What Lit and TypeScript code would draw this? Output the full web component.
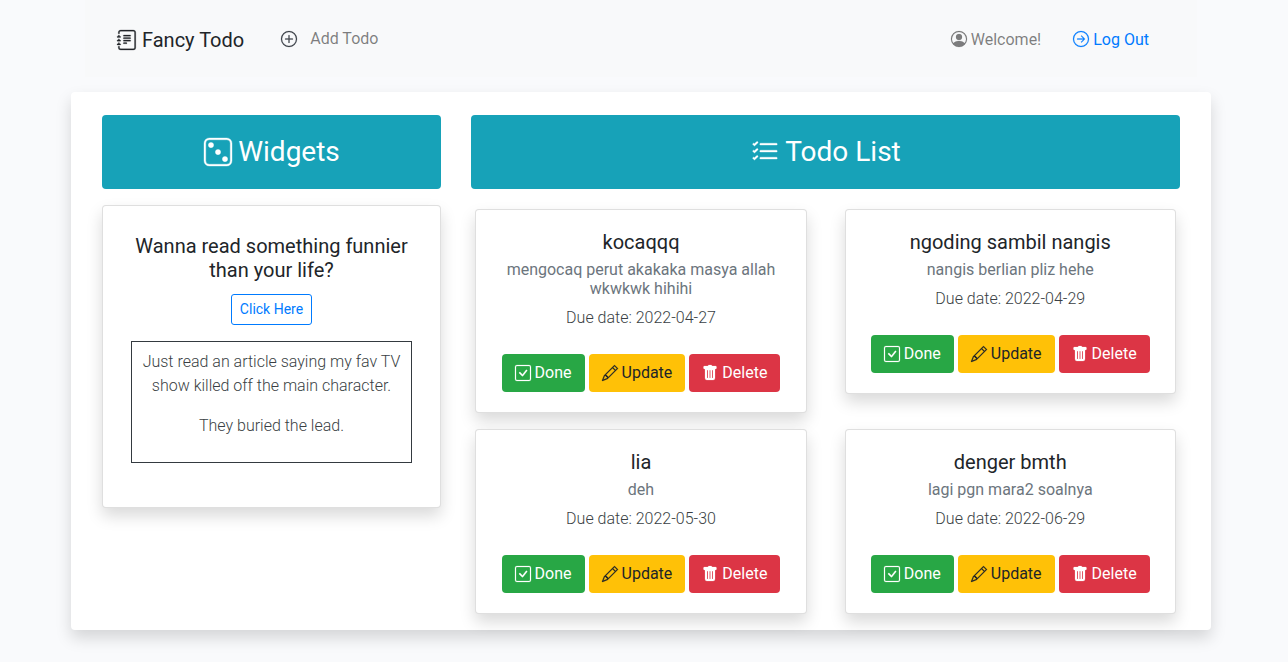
import { LitElement, html, css, svg } from "lit";
import { customElement } from "lit/decorators.js";

const icons: Record<string, any> = {
  journal: svg`<path d="M5 10.5a.5.5 0 0 1 .5-.5h2a.5.5 0 0 1 0 1h-2a.5.5 0 0 1-.5-.5zm0-2a.5.5 0 0 1 .5-.5h5a.5.5 0 0 1 0 1h-5a.5.5 0 0 1-.5-.5zm0-2a.5.5 0 0 1 .5-.5h5a.5.5 0 0 1 0 1h-5a.5.5 0 0 1-.5-.5zm0-2a.5.5 0 0 1 .5-.5h5a.5.5 0 0 1 0 1h-5a.5.5 0 0 1-.5-.5z"/><path d="M3 0h10a2 2 0 0 1 2 2v12a2 2 0 0 1-2 2H3a2 2 0 0 1-2-2v-1h1v1a1 1 0 0 0 1 1h10a1 1 0 0 0 1-1V2a1 1 0 0 0-1-1H3a1 1 0 0 0-1 1v1H1V2a2 2 0 0 1 2-2z"/><path d="M1 5v-.5a.5.5 0 0 1 1 0V5h.5a.5.5 0 0 1 0 1h-2a.5.5 0 0 1 0-1H1zm0 3v-.5a.5.5 0 0 1 1 0V8h.5a.5.5 0 0 1 0 1h-2a.5.5 0 0 1 0-1H1zm0 3v-.5a.5.5 0 0 1 1 0v.5h.5a.5.5 0 0 1 0 1h-2a.5.5 0 0 1 0-1H1z"/>`,
  plus: svg`<path d="M8 15A7 7 0 1 1 8 1a7 7 0 0 1 0 14zm0 1A8 8 0 1 0 8 0a8 8 0 0 0 0 16z"/><path d="M8 4a.5.5 0 0 1 .5.5v3h3a.5.5 0 0 1 0 1h-3v3a.5.5 0 0 1-1 0v-3h-3a.5.5 0 0 1 0-1h3v-3A.5.5 0 0 1 8 4z"/>`,
  person: svg`<path d="M11 6a3 3 0 1 1-6 0 3 3 0 0 1 6 0z"/><path fill-rule="evenodd" d="M0 8a8 8 0 1 1 16 0A8 8 0 0 1 0 8zm8-7a7 7 0 0 0-5.468 11.37C3.242 11.226 4.805 10 8 10s4.757 1.225 5.468 2.37A7 7 0 0 0 8 1z"/>`,
  arrow: svg`<path fill-rule="evenodd" d="M1 8a7 7 0 1 0 14 0A7 7 0 0 0 1 8zm15 0A8 8 0 1 1 0 8a8 8 0 0 1 16 0zM4.5 7.5a.5.5 0 0 0 0 1h5.793l-2.147 2.146a.5.5 0 0 0 .708.708l3-3a.5.5 0 0 0 0-.708l-3-3a.5.5 0 1 0-.708.708L10.293 7.5H4.5z"/>`,
  dice: svg`<path d="M13 1a2 2 0 0 1 2 2v10a2 2 0 0 1-2 2H3a2 2 0 0 1-2-2V3a2 2 0 0 1 2-2h10zM3 0a3 3 0 0 0-3 3v10a3 3 0 0 0 3 3h10a3 3 0 0 0 3-3V3a3 3 0 0 0-3-3H3z"/><path d="M5.5 4a1.5 1.5 0 1 1-3 0 1.5 1.5 0 0 1 3 0zm8 8a1.5 1.5 0 1 1-3 0 1.5 1.5 0 0 1 3 0zm-4-4a1.5 1.5 0 1 1-3 0 1.5 1.5 0 0 1 3 0z"/>`,
  list: svg`<path fill-rule="evenodd" d="M5 11.5a.5.5 0 0 1 .5-.5h9a.5.5 0 0 1 0 1h-9a.5.5 0 0 1-.5-.5zm0-4a.5.5 0 0 1 .5-.5h9a.5.5 0 0 1 0 1h-9a.5.5 0 0 1-.5-.5zm0-4a.5.5 0 0 1 .5-.5h9a.5.5 0 0 1 0 1h-9a.5.5 0 0 1-.5-.5zM3.854 2.146a.5.5 0 0 1 0 .708l-1.5 1.5a.5.5 0 0 1-.708 0l-.5-.5a.5.5 0 1 1 .708-.708L2 3.293l1.146-1.147a.5.5 0 0 1 .708 0zm0 4a.5.5 0 0 1 0 .708l-1.5 1.5a.5.5 0 0 1-.708 0l-.5-.5a.5.5 0 1 1 .708-.708L2 7.293l1.146-1.147a.5.5 0 0 1 .708 0zm0 4a.5.5 0 0 1 0 .708l-1.5 1.5a.5.5 0 0 1-.708 0l-.5-.5a.5.5 0 0 1 .708-.708l.146.147 1.146-1.147a.5.5 0 0 1 .708 0z"/>`,
  check: svg`<path d="M14 1a1 1 0 0 1 1 1v12a1 1 0 0 1-1 1H2a1 1 0 0 1-1-1V2a1 1 0 0 1 1-1h12zM2 0a2 2 0 0 0-2 2v12a2 2 0 0 0 2 2h12a2 2 0 0 0 2-2V2a2 2 0 0 0-2-2H2z"/><path d="M10.97 4.97a.75.75 0 0 1 1.071 1.05l-3.992 4.99a.75.75 0 0 1-1.08.02L4.324 8.384a.75.75 0 1 1 1.06-1.06l2.094 2.093 3.473-4.425a.235.235 0 0 1 .02-.022z"/>`,
  pencil: svg`<path d="M12.146.146a.5.5 0 0 1 .708 0l3 3a.5.5 0 0 1 0 .708l-10 10a.5.5 0 0 1-.168.11l-5 2a.5.5 0 0 1-.65-.65l2-5a.5.5 0 0 1 .11-.168l10-10zM11.207 2.5 13.5 4.793 14.793 3.5 12.5 1.207 11.207 2.5zm1.586 3L10.5 3.207 4 9.707V10h.5a.5.5 0 0 1 .5.5v.5h.5a.5.5 0 0 1 .5.5v.5h.293l6.5-6.5zm-9.761 5.175-.106.106-1.528 3.821 3.821-1.528.106-.106A.5.5 0 0 1 5 12.5V12h-.5a.5.5 0 0 1-.5-.5V11h-.5a.5.5 0 0 1-.468-.325z"/>`,
  trash: svg`<path d="M2.5 1a1 1 0 0 0-1 1v1a1 1 0 0 0 1 1H3v9a2 2 0 0 0 2 2h6a2 2 0 0 0 2-2V4h.5a1 1 0 0 0 1-1V2a1 1 0 0 0-1-1H10a1 1 0 0 0-1-1H7a1 1 0 0 0-1 1H2.5zm3 4a.5.5 0 0 1 .5.5v7a.5.5 0 0 1-1 0v-7a.5.5 0 0 1 .5-.5zM8 5a.5.5 0 0 1 .5.5v7a.5.5 0 0 1-1 0v-7A.5.5 0 0 1 8 5zm3 .5v7a.5.5 0 0 1-1 0v-7a.5.5 0 0 1 1 0z"/>`,
};

const icon = (name: string) =>
  html`<svg class="bi" viewBox="0 0 16 16" fill="currentColor">${icons[name]}</svg>`;

const todos = [
  { t: "kocaqqq", d: "mengocaq perut akakaka masya allah wkwkwk hihihi", due: "2022-04-27" },
  { t: "ngoding sambil nangis", d: "nangis berlian pliz hehe", due: "2022-04-29" },
  { t: "lia", d: "deh", due: "2022-05-30" },
  { t: "denger bmth", d: "lagi pgn mara2 soalnya", due: "2022-06-29" },
];

@customElement("app-root")
export class AppRoot extends LitElement {
  static styles = css`
    :host {
      display: block;
      width: 1288px;
      height: 662px;
      overflow: hidden;
      background: #f9fafc;
      font-family: Roboto, "Liberation Sans", sans-serif;
      font-size: 16px;
      line-height: 24px;
      color: #212529;
      box-sizing: border-box;
    }
    * { box-sizing: border-box; }
    .bi { display: inline-block; flex: none; overflow: visible; stroke: currentColor; stroke-width: .2; }
    .nav {
      width: 1112px;
      height: 77px;
      margin-left: 85px;
      background: #f8f9fa;
      display: flex;
      align-items: center;
      padding: 0 32px;
    }
    .brand { display: flex; align-items: center; font-size: 20px; line-height: 30px; margin-top: 3px; }
    .brand .bi { width: 20px; height: 20px; margin-right: 5px; }
    .add { display: flex; align-items: center; color: rgba(0,0,0,.5); margin-left: 37px; }
    .add .bi { width: 16px; height: 16px; margin-right: 13px; color: #343a40; }
    .right { margin-left: auto; display: flex; align-items: center; padding-right: 16px; margin-top: 2px; }
    .welcome { display: flex; align-items: center; gap: 4px; color: rgba(0,0,0,.5); }
    .logout { display: flex; align-items: center; gap: 4px; color: #007bff; margin-left: 32px; }
    .right .bi { width: 16px; height: 16px; margin-top: -1px; }
    .main {
      width: 1140px;
      height: 538px;
      margin: 15px 0 0 71px;
      background: #fff;
      border-radius: 4px;
      box-shadow: 0 8px 16px rgba(0,0,0,.15);
      padding: 23px 31px;
      display: flex;
      gap: 30px;
    }
    .left { width: 339px; flex: none; }
    .col-right { width: 709px; flex: none; }
    .head {
      height: 74px;
      background: #17a2b8;
      color: #fff;
      border-radius: 4px;
      display: flex;
      align-items: center;
      justify-content: center;
      font-size: 28px;
      line-height: 34px;
      font-weight: 400;
      margin: 0;
    }
    .head .bi { width: 28px; height: 28px; margin: 0 6px 0 1px; }
    .card {
      background: #fff;
      border: 1px solid rgba(0,0,0,.125);
      border-radius: 4px;
      box-shadow: 0 8px 16px rgba(0,0,0,.15);
      text-align: center;
    }
    .widget { margin-top: 16px; height: 303px; padding: 28px 28px 0; }
    .widget h5 { font-size: 20px; line-height: 24px; font-weight: 400; margin: 0 0 12px; }
    .click {
      display: inline-block;
      font-size: 14px;
      line-height: 21px;
      padding: 4px 8px;
      color: #007bff;
      border: 1px solid #007bff;
      border-radius: 3px;
      background: transparent;
      font-family: inherit;
    }
    .joke {
      margin-top: 16px;
      height: 122px;
      border: 1px solid #343a40;
      padding: 8px 8px 0;
      font-weight: 300;
      color: #3a3f44;
    }
    .joke p { margin: 0 0 16px; }
    .grid {
      display: grid;
      grid-template-columns: 332px 331.5px;
      column-gap: 37.5px;
      row-gap: 15.5px;
      padding: 20px 4px 0;
      align-items: start;
    }
    .todo { padding: 20px; }
    .todo h5 { font-size: 20px; line-height: 24px; font-weight: 400; margin: 0 0 6px; }
    .todo .desc { color: #6c757d; font-weight: 400; margin: 0 0 8px; line-height: 19.2px; }
    .todo .due { font-weight: 300; color: #3a3f44; margin: 0 0 24px; line-height: 24px; }
    .btns { display: flex; justify-content: center; gap: 4px; }
    .btn {
      display: flex;
      align-items: center;
      gap: 4px;
      height: 38px;
      padding: 0 12px;
      border: 1px solid transparent;
      border-radius: 4px;
      font-family: inherit;
      font-size: 16px;
      line-height: 24px;
    }
    .btn .bi { width: 16px; height: 16px; }
    .ok { background: #28a745; color: #fff; }
    .warn { background: #ffc107; color: #212529; }
    .bad { background: #dc3545; color: #fff; }
  `;

  render() {
    return html`
      <nav class="nav">
        <div class="brand">${icon("journal")}Fancy Todo</div>
        <div class="add">${icon("plus")}Add Todo</div>
        <div class="right">
          <span class="welcome">${icon("person")}Welcome!</span>
          <span class="logout">${icon("arrow")}Log Out</span>
        </div>
      </nav>
      <main class="main">
        <section class="left">
          <h3 class="head">${icon("dice")}Widgets</h3>
          <div class="card widget">
            <h5>Wanna read something funnier than your life?</h5>
            <button class="click">Click Here</button>
            <div class="joke">
              <p>Just read an article saying my fav TV show killed off the main character.</p>
              <p>They buried the lead.</p>
            </div>
          </div>
        </section>
        <section class="col-right">
          <h3 class="head">${icon("list")}Todo List</h3>
          <div class="grid">
            ${todos.map(
              (t) => html`<div class="card todo">
                <h5>${t.t}</h5>
                <p class="desc">${t.d}</p>
                <p class="due">Due date: ${t.due}</p>
                <div class="btns">
                  <button class="btn ok">${icon("check")}Done</button>
                  <button class="btn warn">${icon("pencil")}Update</button>
                  <button class="btn bad">${icon("trash")}Delete</button>
                </div>
              </div>`
            )}
          </div>
        </section>
      </main>
    `;
  }
}
